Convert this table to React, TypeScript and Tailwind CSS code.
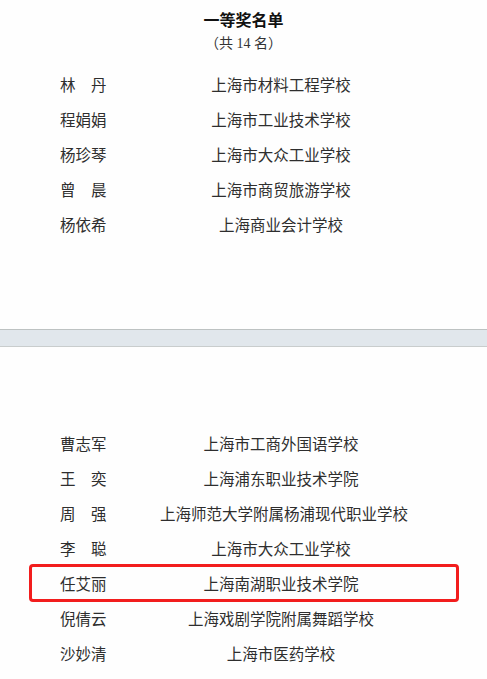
const firstPage = [
  { name: '林　丹', school: '上海市材料工程学校' },
  { name: '程娟娟', school: '上海市工业技术学校' },
  { name: '杨珍琴', school: '上海市大众工业学校' },
  { name: '曾　晨', school: '上海市商贸旅游学校' },
  { name: '杨依希', school: '上海商业会计学校' },
];

const secondPage = [
  { name: '曹志军', school: '上海市工商外国语学校' },
  { name: '王　奕', school: '上海浦东职业技术学院' },
  { name: '周　强', school: '上海师范大学附属杨浦现代职业学校' },
  { name: '李　聪', school: '上海市大众工业学校' },
  { name: '任艾丽', school: '上海南湖职业技术学院', marked: true },
  { name: '倪倩云', school: '上海戏剧学院附属舞蹈学校' },
  { name: '沙妙清', school: '上海市医药学校' },
];

function Row({ name, school, marked }: { name: string; school: string; marked?: boolean }) {
  return (
    <div className="relative flex h-[35px] items-center pl-[60px] text-[15.5px] text-[#2e2e2e]">
      <span className="w-[100px] whitespace-nowrap">{name}</span>
      <span className="w-[242px] whitespace-nowrap text-center">{school}</span>
      {marked && (
        <span className="pointer-events-none absolute left-[29px] top-[-3px] h-[38px] w-[430px] rounded-[4px] border-[3px] border-[#f21d1d]" />
      )}
    </div>
  );
}

export default function App() {
  return (
    <div className="h-[679px] w-[487px] overflow-hidden bg-[#fefefe] font-['Liberation_Serif','Noto_Sans_CJK_SC',serif]">
      <div className="h-[329px] pt-[10px]">
        <h1 className="text-center font-['Noto_Sans_CJK_SC',sans-serif] text-[16px] font-bold leading-[18px] text-[#111]">
          一等奖名单
        </h1>
        <p className="mt-[7px] text-center text-[14px] leading-[18px] text-[#333]">（共 14 名）</p>
        <div className="mt-[15px]">
          {firstPage.map((r) => (
            <Row key={r.name} {...r} />
          ))}
        </div>
      </div>

      <div className="h-[18px] border-y border-t-[#bdc2c2] border-b-[#c9cdcd] bg-[#e1e7ec]" />

      <div className="pt-[80px]">
        {secondPage.map((r) => (
          <Row key={r.name} {...r} />
        ))}
      </div>
    </div>
  );
}
